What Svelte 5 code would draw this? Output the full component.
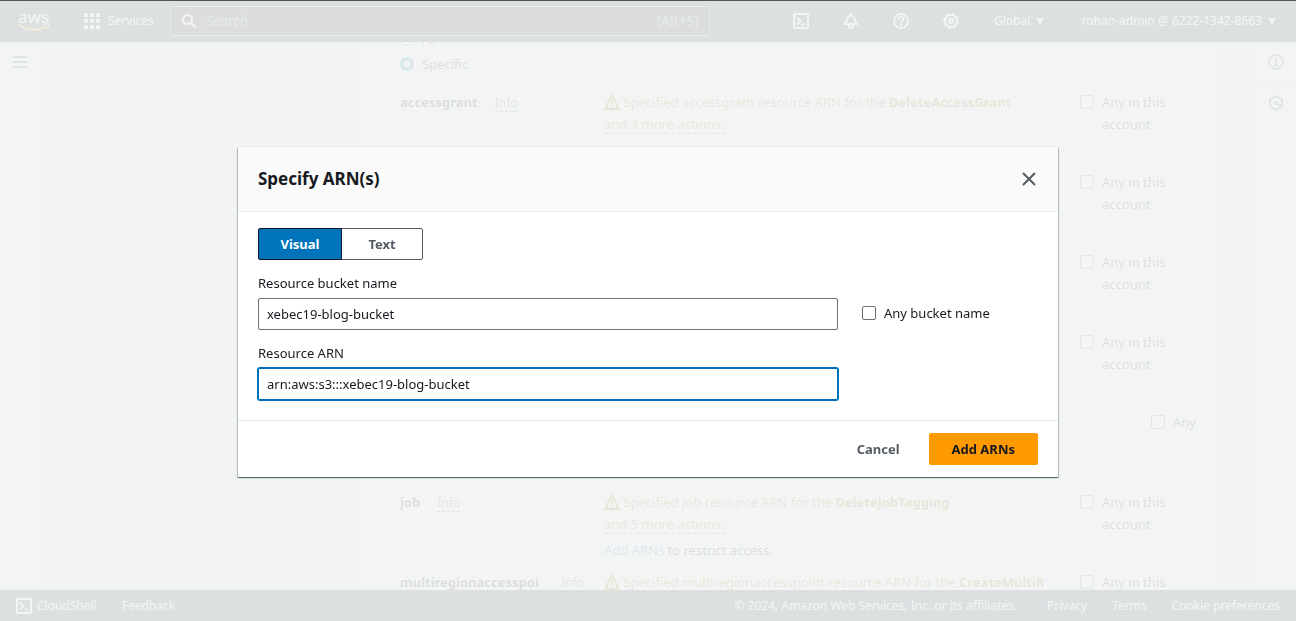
<script>
  let view = "visual";
  let bucket = "xebec19-blog-bucket";
  let arn = "arn:aws:s3:::xebec19-blog-bucket";
  let anyBucket = false;
  let scope = "specific";
  let search = "";

  const resources = [
    { name: "accessgrant", action: "DeleteAccessGrant", more: "and 4 more actions.", any: "Any in this account" },
    { any: "Any in this account" },
    { any: "Any in this account" },
    { any: "Any in this account" },
    { any: "Any", end: true },
    { name: "job", action: "DeleteJobTagging", more: "and 5 more actions.", any: "Any in this account" },
    { name: "multiregionaccesspoi", kind: "multiregionaccesspoint", action: "CreateMultiR", any: "Any in this", long: true }
  ];
</script>

<div class="app">
  <header>
    <a class="logo" href="#home" aria-label="AWS home">
      <span>aws</span>
      <svg width="32" height="9" viewBox="0 0 32 9" fill="none" stroke="#ff9900">
        <path d="M1 1.5C8 7.500 20 8.500 28 3.500" stroke-width="2" />
        <path d="M25 1.500c2-.7 4-.8 5.500-.5.3 1.500-.3 3.500-1.500 5" stroke-width="1.500" />
      </svg>
    </a>
    <button class="services">
      <svg width="16" height="16" viewBox="0 0 16 16" fill="#fff">
        {#each [0, 6, 12] as y}
          {#each [0, 6, 12] as x}
            <rect {x} {y} width="4" height="4" rx="0.500" />
          {/each}
        {/each}
      </svg>
      Services
    </button>
    <label class="search">
      <svg width="14" height="14" viewBox="0 0 14 14" fill="none" stroke="#fff" stroke-width="2">
        <circle cx="5.500" cy="5.500" r="4.500" />
        <path d="M9 9l4.300 4.300" />
      </svg>
      <input type="text" placeholder="Search" aria-label="Search" bind:value={search} />
      <span>[Alt+S]</span>
    </label>
    <nav class="tools">
      <button class="tool" aria-label="CloudShell">
        <svg width="16" height="16" viewBox="0 0 16 16" fill="none" stroke="#fff" stroke-width="2">
          <rect x="1" y="1" width="14" height="14" rx="1" />
          <path d="M4 4.500L7.500 8 4 11.500M8.500 11.500H12" />
        </svg>
      </button>
      <button class="tool" aria-label="Notifications">
        <svg width="16" height="16" viewBox="0 0 16 16" fill="none" stroke="#fff" stroke-width="2" stroke-linejoin="round">
          <path d="M1.500 11C4 9 4.500 5 5.500 3.500 6.500 2 9.500 2 10.500 3.500c1 1.500 1.500 5.500 4 7.500zM6 11v3q0 1 1 1h2q1 0 1-1v-3M8 0v2" />
        </svg>
      </button>
      <button class="tool" aria-label="Help">
        <svg width="16" height="16" viewBox="0 0 16 16" fill="none" stroke="#fff" stroke-width="1.800">
          <circle cx="8" cy="8" r="7" />
          <path d="M5.500 6.500C5.500 3 10.500 3 10.500 6c0 1.800-2.500 1.700-2.500 3.700M8 11v1.800" />
        </svg>
      </button>
      <button class="tool" aria-label="Settings">
        <svg width="16" height="16" viewBox="0 0 16 16" fill="none" stroke="#fff">
          <circle cx="8" cy="8" r="6" stroke-width="2" />
          <circle cx="8" cy="8" r="7.200" stroke-width="1.600" stroke-dasharray="3 2.655" />
          <circle cx="8" cy="8" r="2" stroke-width="2" />
        </svg>
      </button>
      <button class="menu">Global <i></i></button>
      <button class="menu account">rohan-admin @ 6222-1342-8663 <i></i></button>
    </nav>
  </header>

  <main>
    <aside class="rail left">
      <button aria-label="Open navigation">
        <svg width="14" height="12" viewBox="0 0 14 12" stroke="#545b64" stroke-width="2">
          <path d="M0 1h14M0 6h14M0 11h14" />
        </svg>
      </button>
    </aside>
    <div class="steps"></div>
    <section class="card">
      <div class="scrolled">
        <label class="choice"><input type="radio" value="all" bind:group={scope} /> All</label>
        <label class="choice"><input type="radio" value="specific" bind:group={scope} /> Specific</label>
        {#each resources as r}
          <div class="resource">
            <div class="name">
              {#if r.name}
                <strong class:long={r.long}>{r.name}</strong>
                <span class="info"><a href="#info" class:plain={r.long}>Info</a></span>
              {/if}
            </div>
            <div>
              {#if r.name}
                <p class="warning">
                  <svg width="16" height="16" viewBox="0 0 16 16" fill="none" stroke="#906806" stroke-width="2" stroke-linejoin="round">
                    <path d="M8 1.500L15 15H1zM8 6v4M8 11.500v2" />
                  </svg>
                  Specified {r.kind || r.name} resource ARN for the <b>{r.action}</b>
                  {#if r.more}<a href="#actions">{r.more}</a>{/if}
                </p>
                {#if r.more}
                  <p class="add"><a href="#add">Add ARNs</a> to restrict access.</p>
                {/if}
              {/if}
            </div>
            <label class="choice any" class:end={r.end}><input type="checkbox" /> <span>{r.any}</span></label>
          </div>
        {/each}
      </div>
    </section>
    <div class="gutter"></div>
    <aside class="rail right">
      <button aria-label="Information">
        <svg width="16" height="16" viewBox="0 0 16 16" fill="none" stroke="#545b64" stroke-width="1.800">
          <circle cx="8" cy="8" r="7" />
          <path d="M8 4v2M6.500 7.500H8V11M6 11.500h4" />
        </svg>
      </button>
      <button aria-label="Tutorials">
        <svg width="16" height="16" viewBox="0 0 16 16" fill="none" stroke="#545b64" stroke-width="1.800">
          <path d="M8 1l6 3.500v7L8 15l-6-3.500v-7zM8 8l5.500 3" />
          <circle cx="8" cy="8" r="1.200" />
        </svg>
      </button>
    </aside>
  </main>

  <footer>
    <a class="shell" href="#cloudshell">
      <svg width="16" height="16" viewBox="0 0 16 16" fill="none" stroke="#fff" stroke-width="2">
        <rect x="1" y="1" width="14" height="14" rx="1" />
        <path d="M4 4.500L7.500 8 4 11.500M8.500 11.500H12" />
      </svg>
      CloudShell
    </a>
    <a href="#feedback">Feedback</a>
    <span class="copy">© 2024, Amazon Web Services, Inc. or its affiliates.</span>
    <a href="#privacy">Privacy</a>
    <a href="#terms">Terms</a>
    <a href="#cookies">Cookie preferences</a>
  </footer>
</div>

<div class="overlay">
  <div class="modal" role="dialog" aria-modal="true" aria-labelledby="modal-title">
    <div class="modal-head">
      <h2 id="modal-title">Specify ARN(s)</h2>
      <button class="close" aria-label="Close">
        <svg width="14" height="14" viewBox="0 0 14 14" stroke="#545b64" stroke-width="2">
          <path d="M1 1l12 12M13 1L1 13" />
        </svg>
      </button>
    </div>
    <div class="modal-body">
      <div class="segments">
        <button class:active={view === "visual"} on:click={() => (view = "visual")}>Visual</button>
        <button class:active={view === "text"} on:click={() => (view = "text")}>Text</button>
      </div>
      <div class="field">
        <label for="bucket">Resource bucket name</label>
        <input id="bucket" type="text" bind:value={bucket} />
        <label class="choice dark"><input type="checkbox" bind:checked={anyBucket} /> Any bucket name</label>
      </div>
      <div class="field">
        <label for="arn">Resource ARN</label>
        <input id="arn" class="focused" type="text" bind:value={arn} />
      </div>
    </div>
    <div class="modal-foot">
      <button>Cancel</button>
      <button class="primary">Add ARNs</button>
    </div>
  </div>
</div>

<style>
  :global(body) {
    font-family: "Noto Sans", "Open Sans", sans-serif;
    font-size: 13px;
    line-height: 22px;
    color: #16191f;
  }

  * {
    box-sizing: border-box;
  }

  button,
  input {
    font: inherit;
    color: inherit;
    margin: 0;
  }

  button {
    border: 0;
    padding: 0;
    background: none;
    cursor: pointer;
  }

  a {
    color: inherit;
    text-decoration: none;
  }

  p {
    margin: 0;
  }

  svg {
    flex: none;
  }

  .app {
    display: flex;
    flex-direction: column;
    height: 100vh;
    overflow: hidden;
  }

  header {
    display: flex;
    align-items: center;
    flex: none;
    height: 42px;
    background: #1e2e38;
    color: #fff;
    font-size: 12px;
  }

  .logo {
    display: flex;
    flex-direction: column;
    width: 67px;
    padding-left: 18px;
    border-right: 1px solid #414d5c;
    font-size: 17px;
    line-height: 13px;
  }

  .services {
    display: flex;
    align-items: center;
    gap: 8px;
    width: 103px;
    padding-left: 17px;
  }

  .search {
    display: flex;
    align-items: center;
    flex: 0 1 540px;
    min-width: 0;
    height: 30px;
    padding: 0 10px 0 11px;
    gap: 10px;
    border: 1px solid #879596;
    border-radius: 2px;
    background: #16191f;
    color: #879596;
    font-size: 14px;
  }

  .search input {
    flex: 1;
    min-width: 0;
    padding: 0;
    border: 0;
    background: none;
    outline: none;
  }

  .search input::placeholder {
    color: #879596;
    font-style: italic;
  }

  .tools {
    display: flex;
    margin-left: auto;
  }

  .tools button {
    display: flex;
    align-items: center;
    justify-content: center;
    height: 22px;
    border-right: 1px solid #414d5c;
    white-space: nowrap;
  }

  .tools .tool {
    width: 50px;
  }

  .menu {
    gap: 6px;
    width: 86px;
  }

  .tools .account {
    width: auto;
    padding: 0 20px 0 19px;
    border: 0;
  }

  .menu i {
    border: 4px solid transparent;
    border-top: 7px solid #fff;
    border-bottom: 0;
  }

  main {
    display: flex;
    flex: 1;
    min-height: 0;
    background: #f2f3f3;
  }

  .rail {
    flex: none;
    width: 41px;
    background: #fff;
  }

  .rail button {
    display: grid;
    place-items: center;
    width: 40px;
    height: 40px;
  }

  .left {
    border-right: 1px solid #d5dbdb;
  }

  .right {
    border-left: 1px solid #d5dbdb;
  }

  .right button:first-child {
    height: 41px;
    border-bottom: 1px solid #d5dbdb;
  }

  .steps {
    flex: none;
    width: 318px;
  }

  .gutter {
    flex: none;
    width: 38px;
  }

  .card {
    flex: 1;
    min-width: 0;
    overflow: hidden;
    padding: 0 20px 0 40px;
    border: 1px solid #d5dbdb;
    border-width: 0 1px;
    background: #fff;
  }

  .scrolled {
    display: flow-root;
    margin-top: -14px;
  }

  .choice {
    display: flex;
    gap: 8px;
    color: #16191f;
  }

  .scrolled > .choice {
    margin-bottom: 3px;
  }

  .scrolled > .choice + .choice {
    margin-bottom: 16px;
  }

  .choice input {
    appearance: none;
    flex: none;
    width: 14px;
    height: 14px;
    margin-top: 4px;
    border: 1px solid #687078;
    border-radius: 2px;
    background: #fff;
  }

  .choice input[type="radio"] {
    border-radius: 50%;
  }

  .choice input[type="radio"]:checked {
    border: 4px solid #0073bb;
  }

  .choice input[type="checkbox"]:checked {
    background: #0073bb;
  }

  .resource {
    display: grid;
    grid-template-columns: 184px 1fr 116px;
    gap: 20px;
    min-height: 80px;
  }

  .name {
    display: flex;
    align-items: flex-start;
    gap: 8px;
  }

  .long {
    flex: 1;
  }

  .info {
    padding-left: 8px;
    border-left: 1px solid #eaeded;
    font-size: 12px;
    line-height: 24px;
    color: #545b64;
  }

  .info a {
    border-bottom: 1px dashed #545b64;
  }

  .info .plain {
    border: 0;
  }

  .warning {
    color: #906806;
  }

  .warning svg {
    vertical-align: -3px;
  }

  .warning a {
    display: table;
    line-height: 18px;
    margin-top: 2px;
    border-bottom: 1px dashed #906806;
  }

  .add {
    margin-top: 5px;
  }

  .add a {
    color: #0073bb;
  }

  .end {
    justify-content: flex-end;
  }

  footer {
    display: flex;
    align-items: center;
    flex: none;
    gap: 25px;
    height: 31px;
    padding: 0 16px;
    background: #1e2e38;
    color: #fff;
    font-size: 12px;
  }

  .shell {
    display: flex;
    align-items: center;
    gap: 5px;
  }

  .copy {
    margin-left: auto;
    margin-right: 5px;
  }

  .overlay {
    position: fixed;
    inset: 0;
    display: grid;
    place-items: center;
    padding-top: 2px;
    border-top: 1px solid #545358;
    background: rgba(242, 244, 243, 0.9);
  }

  .modal {
    width: 820px;
    max-width: 90vw;
    background: #fff;
    box-shadow:
      0 -1px 0 #eaeded,
      0 1px 1px rgba(0, 28, 36, 0.4),
      1px 1px 1px rgba(0, 28, 36, 0.2),
      -1px 1px 1px rgba(0, 28, 36, 0.2);
  }

  .modal-head {
    display: flex;
    align-items: center;
    justify-content: space-between;
    height: 65px;
    padding: 0 22px 0 20px;
    background: #fafafa;
    border-bottom: 1px solid #eaeded;
  }

  h2 {
    margin: 0;
    font-size: 17px;
    font-weight: 700;
  }

  .close {
    display: grid;
  }

  .modal-body {
    padding: 16px 20px 20px;
  }

  .segments {
    display: flex;
    margin-bottom: 12px;
  }

  .segments button {
    height: 32px;
    padding: 0 20px;
    border: 1px solid #545b64;
    border-radius: 0 2px 2px 0;
    color: #545b64;
    font-weight: 700;
    min-width: 82px;
  }

  .segments button:first-child {
    border-radius: 2px 0 0 2px;
    margin-right: -1px;
    min-width: 84px;
  }

  .segments .active {
    position: relative;
    border-color: #16191f;
    background: #0073bb;
    color: #fff;
  }

  .field {
    display: grid;
    grid-template-columns: 580px 1fr;
    column-gap: 24px;
    row-gap: 4px;
  }

  .field + .field {
    margin-top: 12px;
  }

  .field > label:first-child {
    grid-column: 1 / -1;
  }

  .field > input {
    min-width: 0;
    height: 32px;
    padding: 0 8px;
    border: 1px solid #687078;
    border-radius: 2px;
  }

  .field > .focused {
    border-color: #0073bb;
    outline: 0;
    box-shadow: 0 0 0 1px #0073bb;
  }

  .dark {
    padding-top: 4px;
  }

  .modal-foot {
    display: flex;
    justify-content: flex-end;
    gap: 6px;
    padding: 12px 20px;
    border-top: 1px solid #eaeded;
  }

  .modal-foot button {
    height: 32px;
    padding: 0 23px;
    border-radius: 2px;
    color: #545b64;
    font-weight: 700;
  }

  .modal-foot .primary {
    background: #ff9900;
    color: #16191f;
  }
</style>
